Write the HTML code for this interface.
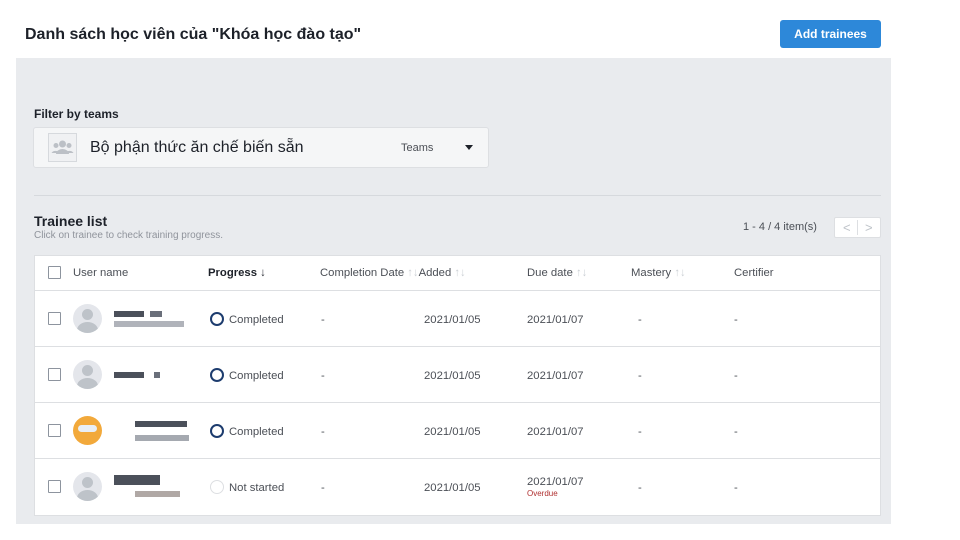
<!DOCTYPE html><html><head><meta charset="utf-8"><style>
*{margin:0;padding:0;box-sizing:border-box}
body{width:960px;height:540px;background:#fff;font-family:"Liberation Sans",sans-serif;position:relative;overflow:hidden;color:#1d2129}
.a{position:absolute}
.panel{left:16px;top:58px;width:875px;height:466px;background:#e9ebee}
.tbl{left:34px;top:255px;width:847px;height:261px;background:#fff;border:1px solid #dddfe2}
.row{position:absolute;left:0;width:845px;border-top:1px solid #dddfe2;height:56px}
.cb{position:absolute;width:13px;height:13px;border:1px solid #8d949e;background:#fff;border-radius:1px}
.t{font-size:11.3px;line-height:14px;color:#4b4f56;position:absolute;white-space:nowrap}
.row .t{margin-top:1px}
.av{position:absolute;left:38px;top:13px;width:29px;height:29px;border-radius:50%;background:#e4e6eb;overflow:hidden}
.av:before{content:"";position:absolute;left:9px;top:5px;width:11px;height:11px;border-radius:50%;background:#bec3c9}
.av:after{content:"";position:absolute;left:4px;top:18px;width:21px;height:16px;border-radius:50% 50% 0 0;background:#bec3c9}
.owl:before,.owl:after{display:none}
.ring{position:absolute;left:175px;top:21px;width:14px;height:14px;border-radius:50%;border:2.5px solid #1d3c6e}
.px{position:absolute;height:6px;background:#6a6f7a}
</style></head><body>
<div class="a" style="left:25px;top:26px;font-size:16px;font-weight:bold;color:#1d2129">Danh sách học viên của "Khóa học đào tạo"</div>
<div class="a" style="left:780px;top:20px;width:101px;height:28px;background:#2d88d9;border-radius:3px;color:#fff;font-size:12px;font-weight:bold;text-align:center;line-height:28px">Add trainees</div>
<div class="a panel"></div>
<div class="a" style="left:34px;top:107px;font-size:12px;font-weight:bold;color:#1d2129">Filter by teams</div>
<div class="a" style="left:33px;top:127px;width:456px;height:41px;background:#f5f6f7;border:1px solid #dddfe2;border-radius:3px"></div>
<div class="a" style="left:48px;top:133px;width:29px;height:29px;border:1px solid #d6d9dd;background:#f0f1f3">
<svg width="27" height="27" viewBox="0 0 27 27"><circle cx="13.5" cy="10" r="3.5" fill="#bcc0c6"/><circle cx="7" cy="11.5" r="2.5" fill="#bcc0c6"/><circle cx="20" cy="11.5" r="2.5" fill="#bcc0c6"/><path d="M7 20a6.5 5 0 0 1 13 0z" fill="#bcc0c6"/><path d="M2.5 19a4.5 4 0 0 1 8 0zM16.5 19a4.5 4 0 0 1 8 0z" fill="#bcc0c6"/></svg></div>
<div class="a" style="left:90px;top:139px;font-size:16px;color:#1d2129">Bộ phận thức ăn chế biến sẵn</div>
<div class="a" style="left:401px;top:142px;font-size:11px;color:#4b4f56">Teams</div>
<div class="a" style="left:465px;top:145px;width:0;height:0;border-left:4.5px solid transparent;border-right:4.5px solid transparent;border-top:5px solid #1d2129"></div>
<div class="a" style="left:34px;top:195px;width:847px;height:1px;background:#d6d9dd"></div>
<div class="a" style="left:34px;top:213px;font-size:14px;font-weight:bold;color:#1d2129">Trainee list</div>
<div class="a" style="left:34px;top:230px;font-size:10px;color:#90949c">Click on trainee to check training progress.</div>
<div class="a" style="left:743px;top:221px;font-size:11px;color:#4b4f56">1 - 4 / 4 item(s)</div>
<div class="a" style="left:834px;top:217px;width:47px;height:21px;background:#fff;border:1px solid #dddfe2;border-radius:2px;font-size:13px;color:#bec3c9;line-height:19px"><span style="position:absolute;left:8px">&lt;</span><span style="position:absolute;left:22px;top:2px;width:1px;height:15px;background:#dddfe2"></span><span style="position:absolute;left:30px">&gt;</span></div>
<div class="a tbl">
<div class="cb" style="left:13px;top:10px"></div>
<div class="t" style="left:38px;top:10px">User name</div>
<div class="t" style="left:173px;top:10px;font-weight:bold;color:#1d2129">Progress ↓</div>
<div class="t" style="left:285px;top:10px">Completion Date <span style="color:#ccd0d5">↑↓</span>Added <span style="color:#ccd0d5">↑↓</span></div>
<div class="t" style="left:492px;top:10px">Due date <span style="color:#ccd0d5">↑↓</span></div>
<div class="t" style="left:596px;top:10px">Mastery <span style="color:#ccd0d5">↑↓</span></div>
<div class="t" style="left:699px;top:10px">Certifier</div>

<div class="row" style="top:34px"><div class="cb" style="left:13px;top:21px"></div><div class="av"></div>
<div class="px" style="left:79px;top:20px;width:30px;background:#4b505a"></div><div class="px" style="left:115px;top:20px;width:12px"></div><div class="px" style="left:79px;top:30px;width:70px;background:#b0b3ba"></div>
<div class="ring"></div><div class="t" style="left:194px;top:21px">Completed</div><div class="t" style="left:286px;top:21px">-</div><div class="t" style="left:389px;top:21px">2021/01/05</div><div class="t" style="left:492px;top:21px">2021/01/07</div><div class="t" style="left:603px;top:21px">-</div><div class="t" style="left:699px;top:21px">-</div></div>

<div class="row" style="top:90px"><div class="cb" style="left:13px;top:21px"></div><div class="av"></div>
<div class="px" style="left:79px;top:25px;width:30px;background:#4b505a"></div><div class="px" style="left:119px;top:25px;width:6px"></div>
<div class="ring"></div><div class="t" style="left:194px;top:21px">Completed</div><div class="t" style="left:286px;top:21px">-</div><div class="t" style="left:389px;top:21px">2021/01/05</div><div class="t" style="left:492px;top:21px">2021/01/07</div><div class="t" style="left:603px;top:21px">-</div><div class="t" style="left:699px;top:21px">-</div></div>

<div class="row" style="top:146px"><div class="cb" style="left:13px;top:21px"></div><div class="av owl" style="background:#f2a93b"><span style="position:absolute;left:5px;top:9px;width:19px;height:7px;border-radius:4px;background:#e8eef5"></span></div>
<div class="px" style="left:100px;top:18px;width:52px;background:#4b505a"></div><div class="px" style="left:100px;top:32px;width:54px;background:#a5a9b0"></div>
<div class="ring"></div><div class="t" style="left:194px;top:21px">Completed</div><div class="t" style="left:286px;top:21px">-</div><div class="t" style="left:389px;top:21px">2021/01/05</div><div class="t" style="left:492px;top:21px">2021/01/07</div><div class="t" style="left:603px;top:21px">-</div><div class="t" style="left:699px;top:21px">-</div></div>

<div class="row" style="top:202px"><div class="cb" style="left:13px;top:21px"></div><div class="av"></div>
<div class="px" style="left:79px;top:16px;width:46px;height:10px;background:#4b505a"></div><div class="px" style="left:100px;top:32px;width:45px;background:#b0a8a5"></div>
<div class="ring" style="border:1.5px solid #dddfe2"></div><div class="t" style="left:194px;top:21px">Not started</div><div class="t" style="left:286px;top:21px">-</div><div class="t" style="left:389px;top:21px">2021/01/05</div><div class="t" style="left:492px;top:15px">2021/01/07</div><div class="t" style="left:492px;top:29px;font-size:8px;line-height:10px;color:#b03030">Overdue</div><div class="t" style="left:603px;top:21px">-</div><div class="t" style="left:699px;top:21px">-</div></div>
</div>
</body></html>
